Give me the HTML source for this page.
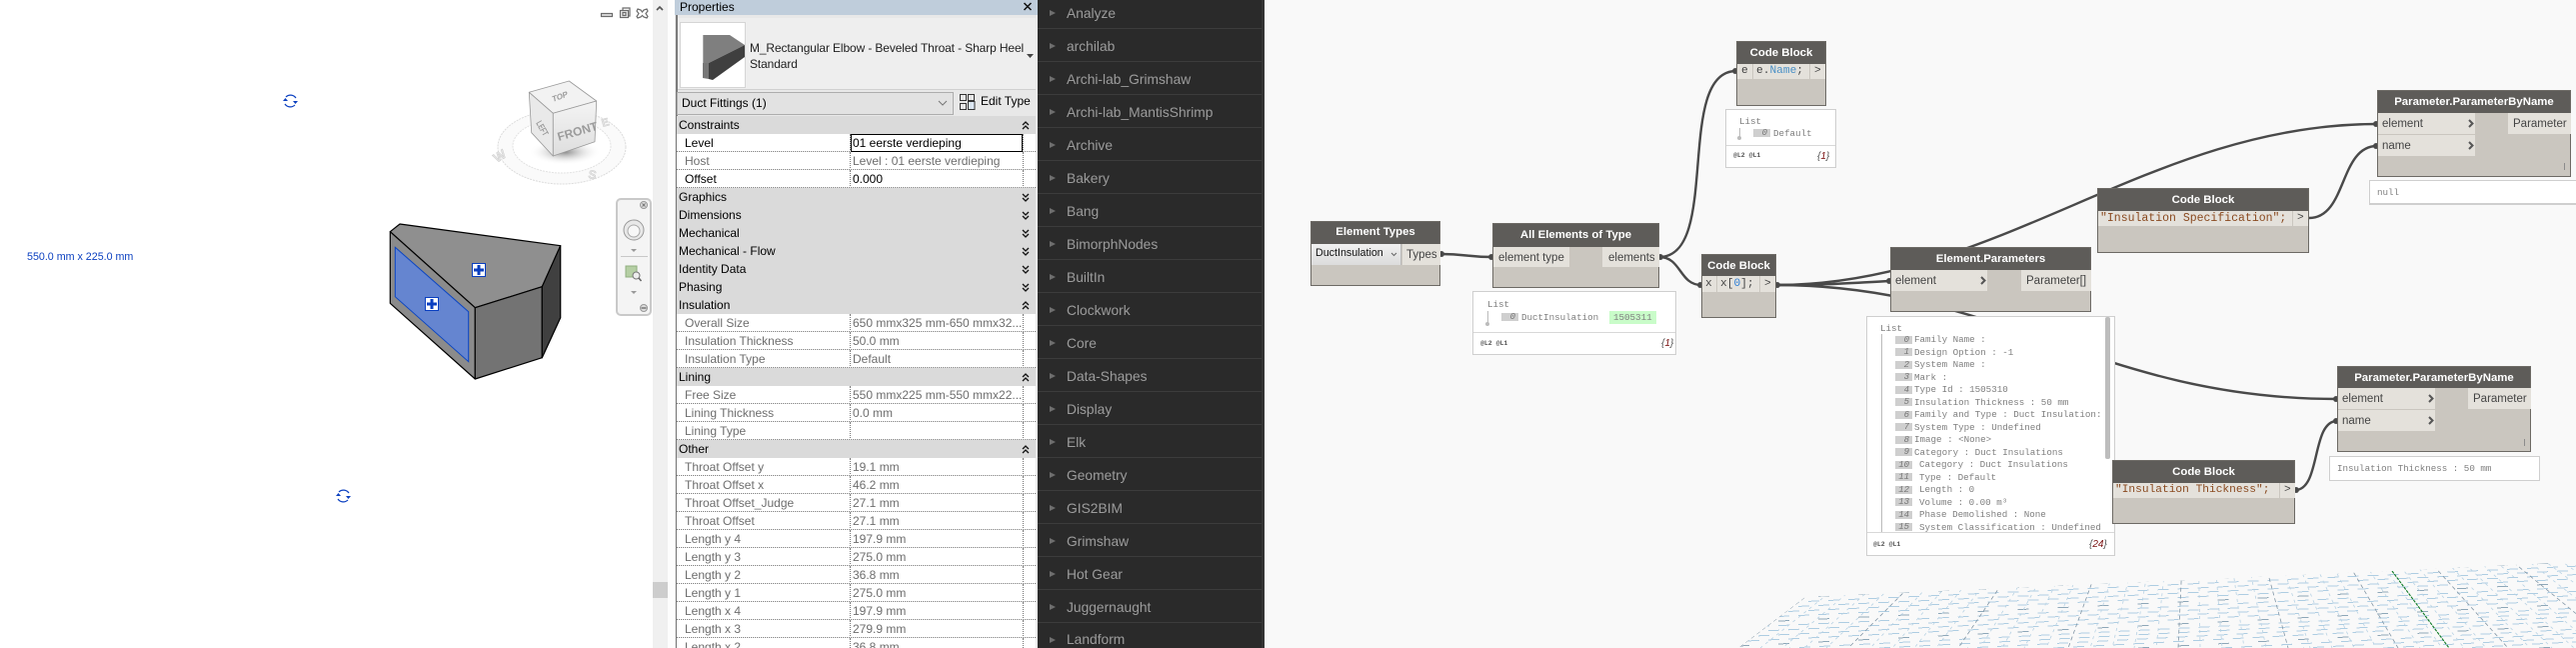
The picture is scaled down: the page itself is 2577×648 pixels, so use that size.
<!DOCTYPE html>
<html><head><meta charset="utf-8"><style>
html,body{margin:0;padding:0;width:2577px;height:648px;overflow:hidden;background:#fff}
*{box-sizing:border-box}
body{position:relative;font-family:"Liberation Sans",sans-serif;font-size:12px;color:#000}
.a{position:absolute;white-space:pre}
.r{position:absolute;left:677px;width:359px;height:18px;background:#fff;border-bottom:1px dotted #777;overflow:hidden}
.r .l{position:absolute;left:8px;top:2px;color:#6e6e6e}
.r .v{position:absolute;left:176px;top:2px;color:#6e6e6e}
.r:before{content:"";position:absolute;left:173px;top:0;height:18px;border-left:1px dotted #777}
.r:after{content:"";position:absolute;left:346px;top:0;height:18px;border-left:1px dotted #777}
.r .k{color:#000}
.g{position:absolute;left:677px;width:359px;height:18px;background:#dadada;padding:2px 0 0 2px;color:#000}
.g svg{position:absolute;left:344px;top:4px}
.m{position:absolute;left:1038px;width:224px;height:33px;border-bottom:1px solid #3c3c3c;color:#9c9c9c;font-size:13.8px;padding:9.5px 0 0 29px;overflow:hidden}
.m:before{content:"";position:absolute;left:12px;top:14px;border-left:6px solid #6e6e6e;border-top:3px solid transparent;border-bottom:3px solid transparent}
.n{position:absolute;background:#cac6bf;border:1px solid #6d6a65}
.h{position:absolute;left:0;top:0;right:0;background:#5e5c59;color:#fff;font-weight:bold;font-size:11.4px;text-align:center}
.p{position:absolute;background:#e4e1db;color:#444;font-size:11.5px;white-space:pre}
.c{position:absolute;background:#e4e1db;color:#444;font-family:"Liberation Mono",monospace;font-size:11.2px;white-space:pre}
.b{position:absolute;background:#fff;border:1px solid #cfcfcf}
.x{position:absolute;font-family:"Liberation Mono",monospace;font-size:9.2px;color:#808080;white-space:pre}
.i{position:absolute;left:28px;width:17px;height:8px;background:#cfcfcf;color:#777;font:italic 9px/8px "Liberation Mono",monospace;text-align:right;padding-right:3px}
.f{position:absolute;font:bold 6.5px "Liberation Mono",monospace;color:#555}
.o{position:absolute;font:italic 10px "Liberation Sans",sans-serif;color:#555}
.ar{position:absolute;width:6px;height:9px}
</style></head><body>

<!-- Revit view -->
<div class="a" style="left:0;top:0;width:653px;height:648px;background:#fff"></div>
<div class="a" style="left:653px;top:0;width:15px;height:648px;background:#f0f0f0"></div>
<div class="a" style="left:653px;top:582px;width:15px;height:16px;background:#cdcdcd"></div>
<div class="a" style="left:668px;top:0;width:8px;height:648px;background:#fdfdfd"></div>
<svg class="a" style="left:0;top:0" width="676" height="648">
 <g stroke="#000" stroke-width="1.2" stroke-linejoin="round">
  <polygon points="390.3,231.7 400,224 560.7,245.7 542.3,286.7 475.3,307.7" fill="#8f8f8f"/>
  <polygon points="390.3,231.7 475.3,307.7 475.3,379 390.3,303.3" fill="#8b8b8b"/>
  <polygon points="475.3,307.7 542.3,286.7 542.3,357.7 475.3,379" fill="#737373"/>
  <polygon points="542.3,286.7 560.7,245.7 560.7,317.7 542.3,357.7" fill="#404040"/>
 </g>
 <polygon points="395.3,247.3 468.7,311.7 468.7,361.7 395.3,296.7" fill="#6585d0" stroke="#0a45c4" stroke-width="1"/>
 <g><rect x="472.5" y="263.5" width="13" height="13" fill="#fff" stroke="#0a3fc0" stroke-width="1"/><path d="M479 265v10M474 270h10" stroke="#0a3fc0" stroke-width="3" fill="none"/></g>
 <g><rect x="425.5" y="297.5" width="13" height="13" fill="#fff" stroke="#0a3fc0" stroke-width="1"/><path d="M432 299v10M427 304h10" stroke="#0a3fc0" stroke-width="3" fill="none"/></g>
 <g fill="none" stroke="#0a3fc0" stroke-width="1.2">
  <path d="M286 97a6.5 6.5 0 0 1 10 1M295 105a6.5 6.5 0 0 1-10-1"/>
  <path d="M339 492a6.5 6.5 0 0 1 10 1M348 500a6.5 6.5 0 0 1-10-1"/>
 </g>
 <g fill="#0a3fc0"><path d="M283 101h5l-2.5-3zM298 101h-5l2.5 3zM336 496h5l-2.5-3zM351 496h-5l2.5 3z"/></g>
 <!-- window controls -->
 <g fill="none" stroke="#6c6c6c" stroke-width="1.2">
  <rect x="601.5" y="13.5" width="11" height="3" fill="#ddd"/>
  <rect x="620.5" y="10.5" width="8" height="7" fill="#eee"/><path d="M623 10V8h7v8h-2"/><rect x="623" y="12.5" width="3" height="3"/>
  <path d="M638 9l3 1 1.5 2 1.5-2 3-1 1 2-2 2.5 2 3-1 1.5-3-1-1.5-1.5-1.5 1.5-3 1-1-1.5 2-3-2-2.5z"/>
 </g>
 <path d="M657 10l3-3 3 3" fill="none" stroke="#555" stroke-width="1.6"/>
 <!-- ViewCube -->
 <defs><radialGradient id="sh"><stop offset="0" stop-color="#8a8a8a"/><stop offset="1" stop-color="#fff" stop-opacity="0"/></radialGradient>
 <linearGradient id="fc" x1="0" y1="0" x2="0" y2="1"><stop offset="0" stop-color="#f4f4f4"/><stop offset="1" stop-color="#dedede"/></linearGradient></defs>
 <ellipse cx="562" cy="147" rx="64" ry="37" fill="#fafafa" stroke="#dcdcdc" stroke-dasharray="2 1"/>
 <ellipse cx="562" cy="146" rx="49" ry="27" fill="#fff" stroke="#e2e2e2" stroke-dasharray="2 1"/>
 <ellipse cx="565" cy="152" rx="36" ry="13" fill="url(#sh)"/>
 <g stroke="#9a9a9a" stroke-width=".8" stroke-linejoin="round">
  <polygon points="529.3,92.3 569.3,81 596.7,101 553.3,113.3" fill="#f2f2f2"/>
  <polygon points="529.3,92.3 553.3,113.3 553.3,156 531.7,132.7" fill="#e9e9e9"/>
  <polygon points="553.3,113.3 596.7,101 595,141.7 553.3,156" fill="url(#fc)"/>
 </g>
 <g fill="#9b9b9b" font-family="Liberation Sans,sans-serif" font-weight="bold">
  <text transform="translate(553,102) rotate(-20) skewX(-10)" font-size="8">TOP</text>
  <text transform="translate(559,141) rotate(-16)" font-size="12">FRONT</text>
  <text transform="translate(536,123) rotate(60) scale(.7,1)" font-size="9">LEFT</text>
  <text transform="translate(497,163) rotate(-32)" font-size="13" fill="#e4e4e4" stroke="#c8c8c8" stroke-width=".4">W</text>
  <text transform="translate(588,178) rotate(10)" font-size="12" fill="#e4e4e4" stroke="#c8c8c8" stroke-width=".4">S</text>
  <text transform="translate(603,127) rotate(-16)" font-size="11" fill="#e4e4e4" stroke="#c8c8c8" stroke-width=".4">E</text>
 </g>
 <!-- nav bar -->
 <rect x="617" y="199" width="34" height="116" rx="4" fill="#f4f4f4" stroke="#c9c9c9" stroke-width="2"/>
 <circle cx="644" cy="205" r="3.5" fill="#ddd" stroke="#999"/><path d="M642.5 203.5l3 3M645.5 203.5l-3 3" stroke="#777"/>
 <circle cx="634" cy="230" r="10" fill="#e8e8e8" stroke="#9a9a9a"/><circle cx="634" cy="231" r="6" fill="#f7f7f7" stroke="#aaa"/>
 <path d="M631 249h6l-3 3z" fill="#999"/>
 <path d="M621 256.5h27" stroke="#c8c8c8"/>
 <rect x="626" y="266" width="11" height="11" fill="#b5cfa4" stroke="#8fae7e"/>
 <circle cx="636.5" cy="275.5" r="3.5" fill="#eee" stroke="#777"/><path d="M639 278l2.5 3" stroke="#666" stroke-width="1.5"/>
 <path d="M631 291h6l-3 3z" fill="#999"/>
 <circle cx="644" cy="308" r="3.5" fill="#ddd" stroke="#999"/><path d="M641.5 308h5" stroke="#777" stroke-width="1.5"/>
</svg>
<div class="a" style="left:27px;top:251px;font-size:10.7px;color:#0a3fc0">550.0 mm x 225.0 mm</div>

<!-- Properties -->
<div class="a" style="left:675px;top:0;width:363px;height:648px;background:#e8e8e8"></div>
<div class="a" style="left:675px;top:0;width:363px;height:15px;background:#bfcddb;padding:0 0 0 5px;font-size:12px;line-height:14px">Properties</div>
<svg class="a" style="left:1023px;top:2px" width="11" height="10"><path d="M1.5 1l7 7M8.5 1l-7 7" stroke="#111" stroke-width="1.5"/></svg>
<div class="a" style="left:676px;top:15px;width:2px;height:633px;background:#7b7b7b"></div>
<div class="a" style="left:678px;top:18px;width:358px;height:72px;background:#eeeeee;border-bottom:1px solid #d0d0d0"></div>
<div class="a" style="left:680px;top:22px;width:66px;height:66px;background:#fff;border:1px solid #d5d5d5"></div>
<svg class="a" style="left:700px;top:30px" width="50" height="55">
 <polygon points="3.3,5 30,5 45,15 9,33 3.3,33" fill="#7f7f7f"/>
 <polygon points="9,33 45,15 45,27 13,50 9,49" fill="#3f3f3f"/>
 <polygon points="3,33 9,33 9,49 3,48" fill="#777"/>
</svg>
<div class="a" style="left:750px;top:40px;font-size:12px;line-height:16px;letter-spacing:-.12px;color:#222">M_Rectangular Elbow - Beveled Throat - Sharp Heel
Standard</div>
<svg class="a" style="left:1026px;top:53px" width="9" height="6"><path d="M1 1h7l-3.5 4z" fill="#444"/></svg>
<div class="a" style="left:677px;top:92px;width:277px;height:23px;background:#e2e2e2;border:1px solid #adadad;padding:3px 0 0 4px">Duct Fittings (1)</div>
<svg class="a" style="left:938px;top:100px" width="10" height="7"><path d="M1 1l4 4 4-4" fill="none" stroke="#777"/></svg>
<svg class="a" style="left:959px;top:93px" width="18" height="18" fill="none" stroke="#333"><rect x="1.5" y="1.5" width="6" height="6"/><rect x="1.5" y="10.5" width="6" height="6"/><rect x="9.5" y="1.5" width="6" height="6"/><rect x="9.5" y="8.5" width="6.5" height="8" fill="#dbe6f2"/></svg>
<div class="a" style="left:981px;top:94px">Edit Type</div>

<div class="g" style="top:116px">Constraints<svg width="12" height="10"><path d="M2 5l3-3 3 3M2 9l3-3 3 3" fill="none" stroke="#111" stroke-width="1.3"/></svg></div>
<div class="r" style="top:134px"><span class="l k">Level</span><span class="v k">01 eerste verdieping</span></div>
<div class="a" style="left:851px;top:134px;width:172px;height:18px;border:1px solid #000"></div>
<div class="r" style="top:152px"><span class="l">Host</span><span class="v">Level : 01 eerste verdieping</span></div>
<div class="r" style="top:170px"><span class="l k">Offset</span><span class="v k">0.000</span></div>
<div class="g" style="top:188px">Graphics<svg width="12" height="10"><path d="M2 2l3 3 3-3M2 6l3 3 3-3" fill="none" stroke="#111" stroke-width="1.3"/></svg></div>
<div class="g" style="top:206px">Dimensions<svg width="12" height="10"><path d="M2 2l3 3 3-3M2 6l3 3 3-3" fill="none" stroke="#111" stroke-width="1.3"/></svg></div>
<div class="g" style="top:224px">Mechanical<svg width="12" height="10"><path d="M2 2l3 3 3-3M2 6l3 3 3-3" fill="none" stroke="#111" stroke-width="1.3"/></svg></div>
<div class="g" style="top:242px">Mechanical - Flow<svg width="12" height="10"><path d="M2 2l3 3 3-3M2 6l3 3 3-3" fill="none" stroke="#111" stroke-width="1.3"/></svg></div>
<div class="g" style="top:260px">Identity Data<svg width="12" height="10"><path d="M2 2l3 3 3-3M2 6l3 3 3-3" fill="none" stroke="#111" stroke-width="1.3"/></svg></div>
<div class="g" style="top:278px">Phasing<svg width="12" height="10"><path d="M2 2l3 3 3-3M2 6l3 3 3-3" fill="none" stroke="#111" stroke-width="1.3"/></svg></div>
<div class="g" style="top:296px">Insulation<svg width="12" height="10"><path d="M2 5l3-3 3 3M2 9l3-3 3 3" fill="none" stroke="#111" stroke-width="1.3"/></svg></div>
<div class="r" style="top:314px"><span class="l">Overall Size</span><span class="v">650 mmx325 mm-650 mmx32...</span></div>
<div class="r" style="top:332px"><span class="l">Insulation Thickness</span><span class="v">50.0 mm</span></div>
<div class="r" style="top:350px"><span class="l">Insulation Type</span><span class="v">Default</span></div>
<div class="g" style="top:368px">Lining<svg width="12" height="10"><path d="M2 5l3-3 3 3M2 9l3-3 3 3" fill="none" stroke="#111" stroke-width="1.3"/></svg></div>
<div class="r" style="top:386px"><span class="l">Free Size</span><span class="v">550 mmx225 mm-550 mmx22...</span></div>
<div class="r" style="top:404px"><span class="l">Lining Thickness</span><span class="v">0.0 mm</span></div>
<div class="r" style="top:422px"><span class="l">Lining Type</span></div>
<div class="g" style="top:440px">Other<svg width="12" height="10"><path d="M2 5l3-3 3 3M2 9l3-3 3 3" fill="none" stroke="#111" stroke-width="1.3"/></svg></div>
<div class="r" style="top:458px"><span class="l">Throat Offset y</span><span class="v">19.1 mm</span></div>
<div class="r" style="top:476px"><span class="l">Throat Offset x</span><span class="v">46.2 mm</span></div>
<div class="r" style="top:494px"><span class="l">Throat Offset_Judge</span><span class="v">27.1 mm</span></div>
<div class="r" style="top:512px"><span class="l">Throat Offset</span><span class="v">27.1 mm</span></div>
<div class="r" style="top:530px"><span class="l">Length y 4</span><span class="v">197.9 mm</span></div>
<div class="r" style="top:548px"><span class="l">Length y 3</span><span class="v">275.0 mm</span></div>
<div class="r" style="top:566px"><span class="l">Length y 2</span><span class="v">36.8 mm</span></div>
<div class="r" style="top:584px"><span class="l">Length y 1</span><span class="v">275.0 mm</span></div>
<div class="r" style="top:602px"><span class="l">Length x 4</span><span class="v">197.9 mm</span></div>
<div class="r" style="top:620px"><span class="l">Length x 3</span><span class="v">279.9 mm</span></div>
<div class="a" style="left:677px;top:638px;width:359px;height:10px;background:#fff;overflow:hidden"><div class="a" style="left:173px;top:0;width:1px;height:10px;border-left:1px dotted #777"></div><div class="a" style="left:346px;top:0;width:1px;height:10px;border-left:1px dotted #777"></div><div class="a" style="left:8px;top:2px;height:8px;overflow:hidden;color:#6e6e6e">Length x 2</div><div class="a" style="left:176px;top:2px;height:8px;overflow:hidden;color:#6e6e6e">36.8 mm</div></div>

<!-- Library -->
<div class="a" style="left:1038px;top:0;width:227px;height:648px;background:#2a2a2a"></div>
<div class="a" style="left:1262px;top:0;width:3px;height:648px;background:#343434"></div>
<div class="m" style="top:-4px">Analyze</div>
<div class="m" style="top:29px">archilab</div>
<div class="m" style="top:62px">Archi-lab_Grimshaw</div>
<div class="m" style="top:95px">Archi-lab_MantisShrimp</div>
<div class="m" style="top:128px">Archive</div>
<div class="m" style="top:161px">Bakery</div>
<div class="m" style="top:194px">Bang</div>
<div class="m" style="top:227px">BimorphNodes</div>
<div class="m" style="top:260px">BuiltIn</div>
<div class="m" style="top:293px">Clockwork</div>
<div class="m" style="top:326px">Core</div>
<div class="m" style="top:359px">Data-Shapes</div>
<div class="m" style="top:392px">Display</div>
<div class="m" style="top:425px">Elk</div>
<div class="m" style="top:458px">Geometry</div>
<div class="m" style="top:491px">GIS2BIM</div>
<div class="m" style="top:524px">Grimshaw</div>
<div class="m" style="top:557px">Hot Gear</div>
<div class="m" style="top:590px">Juggernaught</div>
<div class="m" style="top:623px;height:25px;border-bottom:0;padding-top:9px">Landform</div>

<!-- Canvas -->
<div class="a" style="left:1265px;top:0;width:1312px;height:648px;background:#f9f9f9"></div>
<svg class="a" style="left:0;top:0" width="2577" height="648">
 <defs><clipPath id="gc"><polygon points="1739,648 1806,597 2393,571 2577,562 2577,648"/></clipPath></defs>
 <g clip-path="url(#gc)" fill="none">
  <path stroke="#aecde2" stroke-width="1" stroke-dasharray="11 9" shape-rendering="crispEdges" d="M1739 609.2L2577 570.4M1739 618.4L2577 578.8M1739 627.6L2577 587.2M1739 636.8L2577 595.6M1880 648L2577 612.4M2054 648L2577 620.8M2222 648L2577 629.2M2384 648L2577 637.6"/>
  <path stroke="#aecde2" stroke-width="1" stroke-dasharray="11 9" stroke-dashoffset="10" shape-rendering="crispEdges" d="M1739 604.6L2577 566.2M1739 613.8L2577 574.6M1739 632.2L2577 591.4M1739 641.4L2577 599.8M1790 648L2577 608.2M1968 648L2577 616.6M2304 648L2577 633.4M2463 648L2577 641.8"/>
  <path stroke="#8ea7b8" stroke-width="1" stroke-dasharray="11 29" shape-rendering="crispEdges" d="M1739 600L2577 562M1739 623L2577 583M1739 646L2577 604M2139 648L2577 625M2540 648L2577 646"/>
  <path stroke="#b8d2e4" stroke-width=".8" stroke-dasharray="3 4" d="M2195 301L1761 648M2195 301L1783 648M2195 301L1805 648M2195 301L1827 648M2195 301L1871 648M2195 301L1893 648M2195 301L1915 648M2195 301L1937 648M2195 301L1981 648M2195 301L2003 648M2195 301L2025 648M2195 301L2047 648M2195 301L2091 648M2195 301L2113 648M2195 301L2135 648M2195 301L2157 648M2195 301L2201 648M2195 301L2223 648M2195 301L2245 648M2195 301L2267 648M2195 301L2311 648M2195 301L2333 648M2195 301L2355 648M2195 301L2377 648M2195 301L2421 648M2195 301L2443 648M2195 301L2465 648M2195 301L2487 648M2195 301L2531 648M2195 301L2553 648M2195 301L2575 648M2195 301L2577 630.7M2195 301L2577 598.2M2195 301L2577 584.2M2195 301L2577 571.5M2195 301L2577 559.9"/>
  <path stroke="#8296a6" stroke-width=".8" stroke-dasharray="4 3" d="M2195 301L1739 648M2195 301L1849 648M2195 301L1959 648M2195 301L2069 648M2195 301L2179 648M2195 301L2289 648M2195 301L2509 648M2195 301L2577 613.6M2195 301L2399 648"/>
  <path stroke="#0c7a23" stroke-width="1.1" stroke-dasharray="3 1" d="M2393 571L2450 648"/>
 </g>
 <!-- wires -->
 <g fill="none" stroke="#494949" stroke-width="2.4">
  <path d="M1441 254C1467 254 1467 257 1493 257"/>
  <path d="M1660 257C1722 257 1675 71 1737 71"/>
  <path d="M1660 257C1682 257 1680 285 1702 285"/>
  <path d="M1777 285C1830 285 1850 283 1891 281"/>
  <path d="M1777 285C2000 285 2150 124 2378 124"/>
  <path d="M1777 285C2000 285 2100 399 2338 399"/>
  <path d="M2310 218C2348 218 2340 146 2378 146"/>
  <path d="M2296 490C2322 490 2312 421 2338 421"/>
 </g>
 <g fill="#494949">
  <circle cx="1442" cy="254" r="3"/><circle cx="1492" cy="257" r="3"/><circle cx="1661" cy="257" r="3"/>
  <circle cx="1736" cy="71" r="3"/><circle cx="1701" cy="285" r="3"/><circle cx="1778" cy="285" r="3"/>
  <circle cx="1890" cy="281" r="3"/><circle cx="2377" cy="124" r="3"/><circle cx="2377" cy="146" r="3"/>
  <circle cx="2337" cy="399" r="3"/><circle cx="2337" cy="421" r="3"/><circle cx="2297" cy="490" r="3"/>
 </g>
</svg>

<!-- Element Types -->
<div class="n" style="left:1311px;top:221px;width:130px;height:65px">
 <div class="h" style="height:22px;line-height:21px">Element Types</div>
 <div class="a" style="left:0;top:22px;width:90px;height:21px;background:linear-gradient(#f1f1f1,#dcdcdc);border-right:1px solid #bbb;font-size:10.7px;line-height:19px;padding-left:4px;color:#111">DuctInsulation</div>
 <svg class="a" style="left:79px;top:30px" width="7" height="5"><path d="M1 1l2.5 2.5L6 1" fill="none" stroke="#666"/></svg>
 <div class="p" style="left:91px;top:22px;width:38px;height:21px;line-height:23px;padding-left:4px;font-size:11.5px">Types</div>
</div>
<!-- All Elements -->
<div class="n" style="left:1493px;top:223px;width:167px;height:65px">
 <div class="h" style="height:23px;line-height:23px">All Elements of Type</div>
 <div class="p" style="left:0;top:23px;width:76px;height:20px;line-height:22px;padding-left:5px">element type</div>
 <div class="p" style="left:109px;top:23px;width:57px;height:20px;line-height:22px;padding-left:6px">elements</div>
</div>
<div class="b" style="left:1473px;top:291px;width:204px;height:64px">
 <div class="x" style="left:14px;top:7px">List</div>
 <div class="a" style="left:14px;top:19px;width:1px;height:13px;background:#bbb"></div>
 <div class="a" style="left:12px;top:30px;width:4px;height:4px;border-radius:2px;background:#bbb"></div>
 <div class="i" style="top:21px">0</div>
 <div class="x" style="left:48px;top:20px">DuctInsulation</div>
 <div class="x" style="left:136px;top:19px;width:47px;height:13px;background:#c9fcc9;padding:1px 0 0 4px">1505311</div>
 <div class="a" style="left:0;top:40px;width:202px;height:1px;background:#d8d8d8"></div>
 <div class="f" style="left:7px;top:48px">@L2 @L1</div>
 <div class="o" style="left:188px;top:46px">{<span style="color:#7a1010">1</span>}</div>
</div>
<!-- Code Block e.Name -->
<div class="n" style="left:1737px;top:41px;width:90px;height:65px">
 <div class="h" style="height:22px;line-height:22px">Code Block</div>
 <div class="c" style="left:0;top:22px;width:15px;height:15px;line-height:15px;padding-left:4px">e</div>
 <div class="c" style="left:16px;top:22px;width:56px;height:15px;line-height:15px;padding-left:3px">e.<span style="color:#4a90c6">Name</span>;</div>
 <div class="c" style="left:73px;top:22px;width:15px;height:15px;line-height:15px;padding-left:4px">&gt;</div>
</div>
<div class="b" style="left:1726px;top:109px;width:111px;height:59px">
 <div class="x" style="left:13px;top:6px">List</div>
 <div class="a" style="left:13px;top:18px;width:1px;height:11px;background:#bbb"></div>
 <div class="a" style="left:11px;top:26px;width:4px;height:4px;border-radius:2px;background:#bbb"></div>
 <div class="i" style="left:27px;top:19px">0</div>
 <div class="x" style="left:47px;top:18px">Default</div>
 <div class="a" style="left:0;top:35px;width:109px;height:1px;background:#d8d8d8"></div>
 <div class="f" style="left:7px;top:42px">@L2 @L1</div>
 <div class="o" style="left:91px;top:41px">{<span style="color:#7a1010">1</span>}</div>
</div>
<!-- Code Block x[0] -->
<div class="n" style="left:1702px;top:254px;width:75px;height:64px">
 <div class="h" style="height:21px;line-height:22px">Code Block</div>
 <div class="c" style="left:0;top:21px;width:14px;height:16px;line-height:16px;padding-left:3px">x</div>
 <div class="c" style="left:15px;top:21px;width:42px;height:16px;line-height:16px;padding-left:3px">x[<span style="color:#2f7fd6">0</span>];</div>
 <div class="c" style="left:58px;top:21px;width:15px;height:16px;line-height:16px;padding-left:4px">&gt;</div>
</div>
<!-- Element.Parameters -->
<div class="n" style="left:1891px;top:247px;width:201px;height:65px">
 <div class="h" style="height:22px;line-height:23px">Element.Parameters</div>
 <div class="p" style="left:0;top:22px;width:96px;height:21px;line-height:23px;padding-left:4px">element</div>
 <svg class="ar" style="left:89px;top:28px" viewBox="0 0 6 9"><path d="M1 1l3.5 3.5L1 8" fill="none" stroke="#555" stroke-width="2"/></svg>
 <div class="p" style="left:130px;top:22px;width:70px;height:21px;line-height:23px;padding-left:5px">Parameter[]</div>
</div>
<!-- Code Block Spec -->
<div class="n" style="left:2098px;top:188px;width:212px;height:65px">
 <div class="h" style="height:22px;line-height:22px">Code Block</div>
 <div class="c" style="left:0;top:22px;width:194px;height:15px;line-height:15px;padding-left:2px;color:#8a4a20;font-size:11.5px">"Insulation Specification";</div>
 <div class="c" style="left:195px;top:22px;width:15px;height:15px;line-height:15px;padding-left:4px">&gt;</div>
</div>
<!-- Parameter 1 -->
<div class="n" style="left:2378px;top:90px;width:194px;height:87px">
 <div class="h" style="height:22px;line-height:23px">Parameter.ParameterByName</div>
 <div class="p" style="left:0;top:22px;width:97px;height:21px;line-height:23px;padding-left:4px">element</div>
 <div class="p" style="left:0;top:44px;width:97px;height:21px;line-height:23px;padding-left:4px">name</div>
 <svg class="ar" style="left:90px;top:28px" viewBox="0 0 6 9"><path d="M1 1l3.5 3.5L1 8" fill="none" stroke="#555" stroke-width="2"/></svg>
 <svg class="ar" style="left:90px;top:50px" viewBox="0 0 6 9"><path d="M1 1l3.5 3.5L1 8" fill="none" stroke="#555" stroke-width="2"/></svg>
 <div class="p" style="left:130px;top:22px;width:63px;height:21px;line-height:23px;padding-left:5px">Parameter</div>
 <div class="a" style="left:186px;top:72px;width:1px;height:7px;background:#8c8c8c"></div>
</div>
<div class="b" style="left:2370px;top:180px;width:207px;height:25px;border-right:0;border-bottom:2px solid #cfcfcf"><div class="x" style="left:7px;top:6px">null</div></div>
<!-- Parameter 2 -->
<div class="n" style="left:2338px;top:366px;width:194px;height:86px">
 <div class="h" style="height:21px;line-height:22px">Parameter.ParameterByName</div>
 <div class="p" style="left:0;top:21px;width:97px;height:21px;line-height:23px;padding-left:4px">element</div>
 <div class="p" style="left:0;top:43px;width:97px;height:21px;line-height:23px;padding-left:4px">name</div>
 <svg class="ar" style="left:90px;top:27px" viewBox="0 0 6 9"><path d="M1 1l3.5 3.5L1 8" fill="none" stroke="#555" stroke-width="2"/></svg>
 <svg class="ar" style="left:90px;top:49px" viewBox="0 0 6 9"><path d="M1 1l3.5 3.5L1 8" fill="none" stroke="#555" stroke-width="2"/></svg>
 <div class="p" style="left:130px;top:21px;width:63px;height:21px;line-height:23px;padding-left:5px">Parameter</div>
 <div class="a" style="left:186px;top:72px;width:1px;height:7px;background:#8c8c8c"></div>
</div>
<div class="b" style="left:2330px;top:456px;width:211px;height:25px"><div class="x" style="left:7px;top:6px">Insulation Thickness : 50 mm</div></div>

<!-- Big list -->
<div class="b" style="left:1867px;top:316px;width:249px;height:240px">
 <div class="x" style="left:13px;top:6px">List</div>
 <div class="a" style="left:14px;top:17px;width:1px;height:198px;background:#bbb"></div>
 <div class="a" style="left:238px;top:0;width:5px;height:142px;background:#bdbdbd;border-radius:2px"></div>
 <div class="i" style="top:19px">0</div><div class="x" style="left:47px;top:17px">Family Name :</div>
 <div class="i" style="top:31px">1</div><div class="x" style="left:47px;top:30px">Design Option : -1</div>
 <div class="i" style="top:44px">2</div><div class="x" style="left:47px;top:42px">System Name :</div>
 <div class="i" style="top:56px">3</div><div class="x" style="left:47px;top:55px">Mark :</div>
 <div class="i" style="top:69px">4</div><div class="x" style="left:47px;top:67px">Type Id : 1505310</div>
 <div class="i" style="top:81px">5</div><div class="x" style="left:47px;top:80px">Insulation Thickness : 50 mm</div>
 <div class="i" style="top:94px">6</div><div class="x" style="left:47px;top:92px">Family and Type : Duct Insulation:</div>
 <div class="i" style="top:106px">7</div><div class="x" style="left:47px;top:105px">System Type : Undefined</div>
 <div class="i" style="top:119px">8</div><div class="x" style="left:47px;top:117px">Image : &lt;None&gt;</div>
 <div class="i" style="top:131px">9</div><div class="x" style="left:47px;top:130px">Category : Duct Insulations</div>
 <div class="i" style="top:144px">10</div><div class="x" style="left:52px;top:142px">Category : Duct Insulations</div>
 <div class="i" style="top:156px">11</div><div class="x" style="left:52px;top:155px">Type : Default</div>
 <div class="i" style="top:169px">12</div><div class="x" style="left:52px;top:167px">Length : 0</div>
 <div class="i" style="top:181px">13</div><div class="x" style="left:52px;top:180px">Volume : 0.00 m³</div>
 <div class="i" style="top:194px">14</div><div class="x" style="left:52px;top:192px">Phase Demolished : None</div>
 <div class="i" style="top:206px">15</div><div class="x" style="left:52px;top:205px">System Classification : Undefined</div>
 <div class="a" style="left:0;top:215px;width:247px;height:23px;background:#fff;border-top:1px solid #d8d8d8"></div>
 <div class="f" style="left:6px;top:224px">@L2 @L1</div>
 <div class="o" style="left:222px;top:222px">{<span style="color:#7a1010">24</span>}</div>
</div>
<!-- Code Block Thickness -->
<div class="n" style="left:2113px;top:460px;width:183px;height:64px">
 <div class="h" style="height:22px;line-height:22px">Code Block</div>
 <div class="c" style="left:0;top:22px;width:166px;height:15px;line-height:15px;padding-left:2px;color:#8a4a20">"Insulation Thickness";</div>
 <div class="c" style="left:167px;top:22px;width:15px;height:15px;line-height:15px;padding-left:4px">&gt;</div>
</div>
</body></html>
